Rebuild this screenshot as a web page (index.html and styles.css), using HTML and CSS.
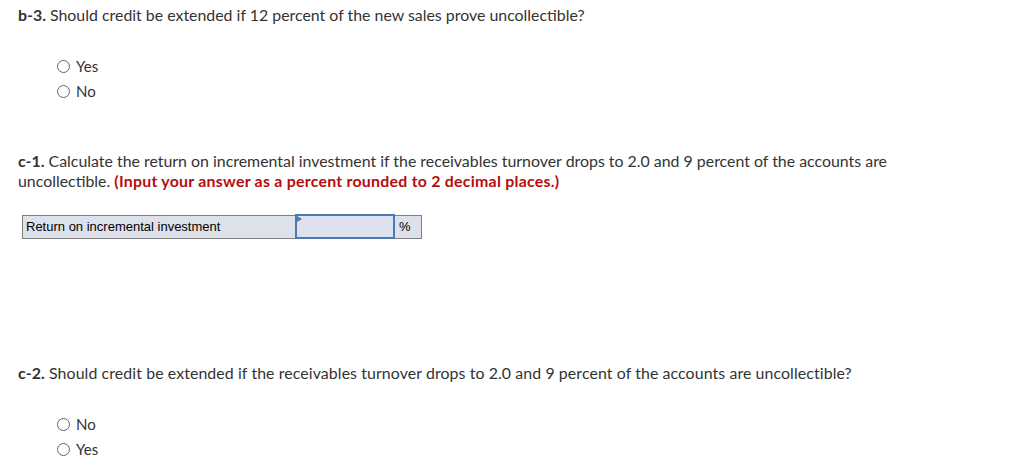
FILE: index.html
```html
<!DOCTYPE html>
<html>
<head>
<meta charset="utf-8">
<link rel="stylesheet" href="styles.css">
</head>
<body>
<div class="page">
  <section class="q q-b3">
    <p class="prompt"><strong>b-3.</strong> Should credit be extended if 12 percent of the new sales prove uncollectible?</p>
    <div class="choices">
      <label class="choice"><span class="radio"></span>Yes</label>
      <label class="choice"><span class="radio"></span>No</label>
    </div>
  </section>

  <section class="q q-c1">
    <p class="prompt"><strong>c-1.</strong> Calculate the return on incremental investment if the receivables turnover drops to 2.0 and 9 percent of the accounts are uncollectible. <strong class="hint">(Input your answer as a percent rounded to 2 decimal places.)</strong></p>
    <table class="grid">
      <tr>
        <td class="label">Return on incremental investment</td>
        <td class="input"><span class="flag"></span></td>
        <td class="unit">%</td>
      </tr>
    </table>
  </section>

  <section class="q q-c2">
    <p class="prompt"><strong>c-2.</strong> Should credit be extended if the receivables turnover drops to 2.0 and 9 percent of the accounts are uncollectible?</p>
    <div class="choices">
      <label class="choice"><span class="radio"></span>No</label>
      <label class="choice"><span class="radio"></span>Yes</label>
    </div>
  </section>
</div>
</body>
</html>
```
FILE: styles.css
```css
html, body {
  margin: 0;
  padding: 0;
  background: #fff;
}
.page {
  padding: 5px 0 0 18px;
  font-family: "Lato", "Open Sans", sans-serif;
  font-size: 15.9px;
  color: #333;
}
.prompt {
  margin: 0;
  line-height: 20px;
  width: 885px;
}
.prompt strong {
  font-weight: 700;
}
.prompt .hint {
  color: #b50d0d;
  letter-spacing: 0.25px;
}
.q-c2 .prompt {
  letter-spacing: 0.09px;
}
.choices {
  display: flex;
  flex-direction: column;
  gap: 5px;
  padding-left: 39px;
}
.choice {
  display: flex;
  align-items: center;
  height: 20px;
  gap: 6px;
  font-size: 15px;
}
.radio {
  width: 11px;
  height: 11px;
  border: 1px solid #666;
  border-radius: 50%;
  box-sizing: content-box;
}
.q-b3 .choices {
  margin-top: 31px;
}
.q-c1 {
  margin-top: 50px;
}
.grid {
  margin: 23px 0 0 4px;
  border-collapse: collapse;
  font-family: "Liberation Sans", Arial, sans-serif;
  font-size: 13px;
  color: #000;
}
.grid td {
  height: 21px;
  padding: 0;
  border: 1px solid #7f7f7f;
  background: #dde1ec;
}
.grid .label {
  width: 269px;
  padding-left: 3px;
}
.grid .input {
  width: 96px;
  border: 2px solid #4a79b4;
  position: relative;
}
.grid .flag {
  position: absolute;
  left: 0;
  top: 0;
  border-left: 5px solid #4a79b4;
  border-top: 3px solid transparent;
  border-bottom: 3px solid transparent;
}
.grid .unit {
  width: 22px;
  padding-left: 4px;
}
.q-c2 {
  margin-top: 124px;
}
.q-c2 .choices {
  margin-top: 31px;
}
```
